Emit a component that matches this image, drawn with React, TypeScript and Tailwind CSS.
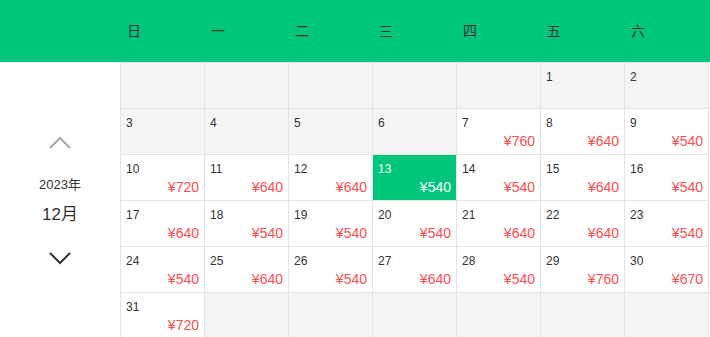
import React from 'react';

type Day = { n?: number; price?: number; off?: boolean; active?: boolean };

const WEEK = ['日', '一', '二', '三', '四', '五', '六'];

const p = (n: number, price: number, active = false): Day => ({ n, price, active });
const off = (n?: number): Day => ({ n, off: true });

const rows: Day[][] = [
  [off(), off(), off(), off(), off(), off(1), off(2)],
  [off(3), off(4), off(5), off(6), p(7, 760), p(8, 640), p(9, 540)],
  [p(10, 720), p(11, 640), p(12, 640), p(13, 540, true), p(14, 540), p(15, 640), p(16, 540)],
  [p(17, 640), p(18, 540), p(19, 540), p(20, 540), p(21, 640), p(22, 640), p(23, 540)],
  [p(24, 540), p(25, 640), p(26, 540), p(27, 640), p(28, 540), p(29, 760), p(30, 670)],
  [p(31, 720), off(), off(), off(), off(), off(), off()],
];

const Cell = ({ d }: { d: Day }) => {
  const bg = d.active ? 'bg-[#00c57a]' : d.off ? 'bg-[#f4f4f4]' : 'bg-white';
  return (
    <div className={`w-[84px] h-[46px] border-r border-b border-[#e3e3e3] ${bg} flex flex-col justify-between px-[5px] pt-[6px] pb-[4px]`}>
      <span className={`text-[12px] leading-[16px] ${d.active ? 'text-white' : 'text-[#333]'}`}>{d.n ?? ''}</span>
      {d.price !== undefined && (
        <span className={`text-[14px] leading-[17px] text-right ${d.active ? 'text-white' : 'text-[#ff4d4f]'}`}>¥{d.price}</span>
      )}
    </div>
  );
};

export default function App() {
  return (
    <div className="w-[710px] h-[337px] overflow-hidden bg-white font-['Liberation_Sans','Noto_Sans_CJK_SC',sans-serif]">
      {/* weekday bar */}
      <div className="h-[62px] bg-[#00c57a] flex pl-[120px]">
        {WEEK.map((w) => (
          <div key={w} className="w-[84px] flex items-center pl-[7px] text-[14px] text-[#333]">
            {w}
          </div>
        ))}
      </div>

      <div className="flex">
        {/* month switcher */}
        <div className="w-[120px] flex flex-col items-center pt-[74px]">
          <svg width="22" height="13" viewBox="0 0 22 13" fill="none" stroke="#a6a6a6" strokeWidth="2">
            <polyline points="1,12 11,2 21,12" />
          </svg>
          <div className="mt-[28px] text-[13px] text-[#333] leading-[16px]">2023年</div>
          <div className="mt-[12px] text-[17px] text-[#333] leading-[20px]">12月</div>
          <svg className="mt-[27px]" width="22" height="13" viewBox="0 0 22 13" fill="none" stroke="#333" strokeWidth="2">
            <polyline points="1,1 11,11 21,1" />
          </svg>
        </div>

        {/* day grid */}
        <div className="border-l border-t border-[#e3e3e3]">
          {rows.map((r, i) => (
            <div key={i} className="flex">
              {r.map((d, j) => (
                <Cell key={j} d={d} />
              ))}
            </div>
          ))}
        </div>
      </div>
    </div>
  );
}
